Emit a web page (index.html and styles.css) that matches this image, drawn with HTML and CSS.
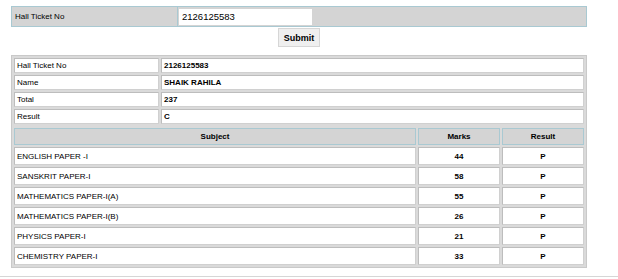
FILE: index.html
```html
<!DOCTYPE html>
<html>
<head>
<meta charset="utf-8">
<link rel="stylesheet" href="styles.css">
</head>
<body>
<div class="wrap">
  <table class="form">
    <tr>
      <td class="form-label">Hall Ticket No</td>
      <td class="form-field"><input class="ticket" type="text" value="2126125583"></td>
    </tr>
  </table>
  <div class="actions"><button class="submit" type="button">Submit</button></div>
  <div class="frame">
    <table class="info">
      <tr><td class="key">Hall Ticket No</td><td class="val">2126125583</td></tr>
      <tr><td class="key">Name</td><td class="val">SHAIK RAHILA</td></tr>
      <tr><td class="key">Total</td><td class="val">237</td></tr>
      <tr><td class="key">Result</td><td class="val">C</td></tr>
    </table>
    <table class="marks">
      <tr><th class="h-subj">Subject</th><th class="h-marks">Marks</th><th class="h-res">Result</th></tr>
      <tr><td class="subj">ENGLISH PAPER -I</td><td class="num">44</td><td class="num">P</td></tr>
      <tr><td class="subj">SANSKRIT PAPER-I</td><td class="num">58</td><td class="num">P</td></tr>
      <tr><td class="subj">MATHEMATICS PAPER-I(A)</td><td class="num">55</td><td class="num">P</td></tr>
      <tr><td class="subj">MATHEMATICS PAPER-I(B)</td><td class="num">26</td><td class="num">P</td></tr>
      <tr><td class="subj">PHYSICS PAPER-I</td><td class="num">21</td><td class="num">P</td></tr>
      <tr><td class="subj">CHEMISTRY PAPER-I</td><td class="num">33</td><td class="num">P</td></tr>
    </table>
  </div>
</div>
<div class="rule"></div>
</body>
</html>
```
FILE: styles.css
```css
html, body {
  margin: 0;
  padding: 0;
  background: #ffffff;
  font-family: "Liberation Sans", Arial, sans-serif;
  font-size: 8px;
  color: #000;
}
.wrap {
  margin: 6px 0 0 11px;
  width: 576px;
}
.form {
  width: 576px;
  border-collapse: collapse;
  background: #d4d4d4;
  border: 1px solid #a9c9d2;
}
.form td {
  padding: 0;
  height: 19px;
}
.form-label {
  width: 162px;
  padding-left: 3px !important;
  border-right: 1px solid #a9c9d2;
  font-size: 8px;
}
.form-field {
  padding-left: 1px !important;
}
.ticket {
  display: block;
  width: 133px;
  height: 16px;
  box-sizing: border-box;
  border: none;
  margin: 0;
  padding: 0 3px;
  background: #fff;
  font-family: "Liberation Sans", Arial, sans-serif;
  font-size: 9.5px;
  color: #000;
}
.actions {
  display: flex;
  justify-content: center;
  padding-top: 1px;
  height: 28px;
  box-sizing: border-box;
}
.submit {
  width: 42px;
  height: 19px;
  padding: 0;
  border: 1px solid #d6d6d6;
  background: #efefef;
  font-family: "Liberation Sans", Arial, sans-serif;
  font-weight: bold;
  font-size: 9px;
  color: #000;
}
.frame {
  border: 1px solid #c9c9c9;
  background: #dadada;
}
.info, .marks {
  width: 100%;
  border-spacing: 2px;
}
.info td, .marks td {
  background: #fff;
  border: 1px solid #d0d0d0;
  border-top-color: #bdbdbd;
  border-left-color: #bdbdbd;
  padding: 0 2px;
}
.info td {
  height: 13px;
}
.key {
  width: 139px;
}
.val {
  font-weight: bold;
}
.marks th {
  background: #d4d4d4;
  border: 1px solid #a9c9d2;
  height: 15px;
  padding: 0;
  font-weight: bold;
  font-size: 8px;
}
.h-marks { width: 80px; }
.h-res { width: 80px; }
.marks td {
  height: 16px;
}
.num {
  text-align: center;
  font-weight: bold;
}
.rule {
  margin-top: 8px;
  border-top: 1px solid #d6d6d6;
}
```
